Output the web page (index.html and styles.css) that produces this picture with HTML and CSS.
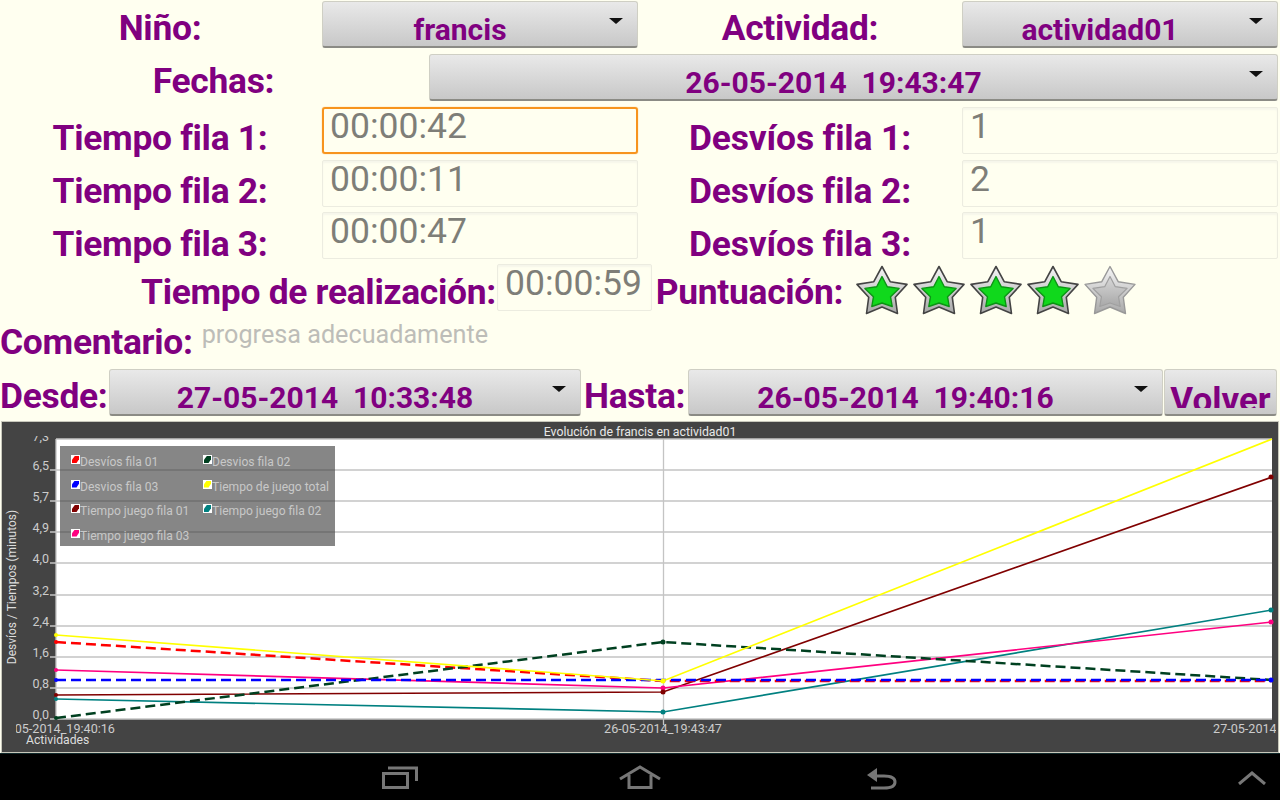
FILE: index.html
```html
<!DOCTYPE html>
<html lang="es">
<head>
    <meta charset="UTF-8">
    <title>Evolución</title>
    <link rel="stylesheet" href="styles.css">
</head>
<body>
    <section class="datos">
        <div class="etiqueta izq">Niño:</div>
        <div class="spinner"><span class="valor">francis</span><i class="flecha"></i></div>
        <div class="etiqueta">Actividad:</div>
        <div class="spinner"><span class="valor">actividad01</span><i class="flecha"></i></div>

        <div class="etiqueta izq fechas">Fechas:</div>
        <div class="spinner ancho"><span class="valor">26-05-2014  19:43:47</span><i class="flecha"></i></div>

        <div class="etiqueta izq baja">Tiempo fila 1:</div>
        <div class="campo foco">00:00:42</div>
        <div class="etiqueta baja desvio">Desvíos fila 1:</div>
        <div class="campo">1</div>

        <div class="etiqueta izq baja">Tiempo fila 2:</div>
        <div class="campo">00:00:11</div>
        <div class="etiqueta baja desvio">Desvíos fila 2:</div>
        <div class="campo">2</div>

        <div class="etiqueta izq baja ultima">Tiempo fila 3:</div>
        <div class="campo">00:00:47</div>
        <div class="etiqueta baja ultima desvio">Desvíos fila 3:</div>
        <div class="campo">1</div>
    </section>

    <section class="puntos">
        <div class="etiqueta realizacion">Tiempo de realización:</div>
        <div class="campo corto">00:00:59</div>
        <div class="etiqueta puntuacion">Puntuación:</div>
        <div class="estrellas">
            <svg class="estrella" viewBox="0 0 52 52"><use href="#star-on"/></svg>
            <svg class="estrella" viewBox="0 0 52 52"><use href="#star-on"/></svg>
            <svg class="estrella" viewBox="0 0 52 52"><use href="#star-on"/></svg>
            <svg class="estrella" viewBox="0 0 52 52"><use href="#star-on"/></svg>
            <svg class="estrella" viewBox="0 0 52 52"><use href="#star-off"/></svg>
        </div>
    </section>

    <section class="comentario">
        <div class="etiqueta">Comentario:</div>
        <div class="nota">progresa adecuadamente</div>
    </section>

    <section class="rango">
        <div class="etiqueta desde">Desde:</div>
        <div class="spinner s-desde"><span class="valor">27-05-2014  10:33:48</span><i class="flecha"></i></div>
        <div class="etiqueta hasta">Hasta:</div>
        <div class="spinner s-hasta"><span class="valor">26-05-2014  19:40:16</span><i class="flecha"></i></div>
        <div class="volver"><span>Volver</span></div>
    </section>

    <section class="grafica">
        <svg class="lienzo" viewBox="2 422 1276 330">
            <defs>
                <clipPath id="zona-y"><rect x="0" y="436" width="56" height="300"/></clipPath>
                <clipPath id="zona-x"><rect x="16" y="720" width="1260" height="20"/></clipPath>
            </defs>
            <text class="titulo" x="640" y="436">Evolución de francis en actividad01</text>
            <rect x="56" y="439" width="1216" height="280" fill="#fff"/>
            <path class="rejilla" d="M56 439H1272M50 470H1272M50 501H1272M50 532H1272M50 563H1272M50 595H1272M50 626H1272M50 657H1272M50 688H1272M50 719H1272M56 719V439M663.5 439V725"/>
            <g class="eje" clip-path="url(#zona-y)">
                <text x="49" y="441">7,3</text>
                <text x="49" y="470">6,5</text>
                <text x="49" y="501">5,7</text>
                <text x="49" y="532">4,9</text>
                <text x="49" y="563">4,0</text>
                <text x="49" y="595">3,2</text>
                <text x="49" y="626">2,4</text>
                <text x="49" y="657">1,6</text>
                <text x="49" y="688">0,8</text>
                <text x="49" y="719">0,0</text>
            </g>
            <text class="eje-y" transform="translate(16 587) rotate(-90)">Desvíos / Tiempos (minutos)</text>
            <g class="eje-x" clip-path="url(#zona-x)">
                <text x="56" y="733">26-05-2014_19:40:16</text>
                <text x="663" y="733">26-05-2014_19:43:47</text>
                <text x="1272" y="733">27-05-2014_10:33:48</text>
            </g>
            <text class="actividades" x="26" y="744">Actividades</text>

            <polyline class="serie" stroke="#800000" points="56,695 663,692 1272,477"/>
            <polyline class="serie" stroke="#008080" points="56,699 663,712 1272,610"/>
            <polyline class="serie" stroke="#ff0080" points="56,670 663,688 1272,622"/>
            <polyline class="serie rayas" stroke="#ff0000" points="56,642 663,681 1272,681"/>
            <polyline class="serie rayas" stroke="#004020" points="56,718 663,642 1272,680"/>
            <polyline class="serie rayas" stroke="#0000ff" points="56,680 1272,680"/>
            <polyline class="serie" stroke="#ffff00" points="56,635 663,681 1272,439"/>

            <g fill="#004020"><circle cx="56" cy="718" r="2"/><circle cx="663" cy="642" r="2.5"/></g>
            <g fill="#ff0000"><circle cx="56" cy="642" r="2"/></g>
            <g fill="#ff0080"><circle cx="56" cy="670" r="2"/><circle cx="663" cy="688" r="2.5"/><circle cx="1271" cy="622" r="2.5"/></g>
            <g fill="#0000ff"><circle cx="56" cy="680" r="2"/><circle cx="1271" cy="680" r="2.5"/></g>
            <g fill="#800000"><circle cx="56" cy="695" r="2"/><circle cx="663" cy="692" r="2.5"/><circle cx="1271" cy="477" r="2.5"/></g>
            <g fill="#008080"><circle cx="56" cy="699" r="2"/><circle cx="663" cy="712" r="2.5"/><circle cx="1271" cy="610" r="2.5"/></g>
            <g fill="#ffff00"><circle cx="56" cy="635" r="2"/><circle cx="663" cy="681" r="2.5"/></g>
        </svg>
        <div class="leyenda">
            <div class="item"><i class="marca c1"></i>Desvíos fila 01</div>
            <div class="item"><i class="marca c2"></i>Desvios fila 02</div>
            <div class="item"><i class="marca c3"></i>Desvios fila 03</div>
            <div class="item"><i class="marca c4"></i>Tiempo de juego total</div>
            <div class="item"><i class="marca c5"></i>Tiempo juego fila 01</div>
            <div class="item"><i class="marca c6"></i>Tiempo juego fila 02</div>
            <div class="item"><i class="marca c7"></i>Tiempo juego fila 03</div>
        </div>
    </section>

    <nav class="barra">
        <svg class="ico recientes" width="36" height="24" viewBox="0 0 36 24">
            <path d="M1.5 8.5H25.5V22.5H1.5Z M6 3H34.5V16"/>
        </svg>
        <svg class="ico casa" width="42" height="24" viewBox="0 0 42 24">
            <path d="M1 14L21 2L41 14 M10 10V22.5H32V10"/>
        </svg>
        <svg class="ico atras" width="32" height="24" viewBox="0 0 32 24">
            <path d="M8 9H18C24 9 29 10 29 15C29 20 24 21 18 21H5"/>
            <path class="relleno" d="M1 8L11 1V15Z"/>
        </svg>
        <svg class="ico subir" width="28" height="14" viewBox="0 0 28 14">
            <path d="M1 13L14 2L27 13"/>
        </svg>
    </nav>

    <svg class="defs" width="0" height="0">
        <defs>
            <linearGradient id="plata" x1="0" y1="0" x2="0" y2="1">
                <stop offset="0" stop-color="#f6f6f6"/>
                <stop offset="1" stop-color="#a8a8a8"/>
            </linearGradient>
            <linearGradient id="gris" x1="0" y1="0" x2="0" y2="1">
                <stop offset="0" stop-color="#d8d8d8"/>
                <stop offset="1" stop-color="#a8a8a8"/>
            </linearGradient>
            <g id="star-on">
                <polygon fill="url(#plata)" stroke="#444" stroke-width="1.6" stroke-linejoin="round" points="26,1.5 34.2,16.7 51,19.4 39.3,32.3 41.5,48.5 26,42 10.5,48.5 12.7,32.3 1,19.4 17.8,16.7"/>
                <polygon fill="#10d81c" stroke="#0b9414" stroke-width="1.4" stroke-linejoin="round" points="26,11.5 31.3,21.7 43.1,23.4 34.56,31.8 36.2,41.5 26,38 15.8,41.5 17.44,31.8 8.9,23.4 20.7,21.7"/>
            </g>
            <g id="star-off">
                <polygon fill="url(#plata)" stroke="#999" stroke-width="1.4" stroke-linejoin="round" points="26,1.5 34.2,16.7 51,19.4 39.3,32.3 41.5,48.5 26,42 10.5,48.5 12.7,32.3 1,19.4 17.8,16.7"/>
                <polygon fill="url(#gris)" stroke="#a0a0a0" stroke-width="1.2" stroke-linejoin="round" points="26,11.5 31.3,21.7 43.1,23.4 34.56,31.8 36.2,41.5 26,38 15.8,41.5 17.44,31.8 8.9,23.4 20.7,21.7"/>
            </g>
        </defs>
    </svg>
</body>
</html>
```

FILE: styles.css
```css
* {
    margin: 0px;
    padding: 0px;
    box-sizing: border-box;
}

body {
    background-color: #fffff0;
    font-family: Roboto, "Liberation Sans", sans-serif;
    width: 1280px;
    height: 800px;
    overflow: hidden;
}

/* textos morados */
.etiqueta {
    color: #800080;
    font-size: 35.4px;
    font-weight: 700;
    line-height: 54px;
    text-align: center;
    white-space: nowrap;
    letter-spacing: -0.3px;
}

.izq {
    padding-right: 2px;
}

.desvio {
    letter-spacing: -0.15px;
}

.baja {
    padding-top: 4px;
}

.ultima {
    padding-top: 5px;
}

/* rejilla de arriba */
.datos {
    display: grid;
    grid-template-columns: 322px 316px 324px 316px;
    grid-template-rows: 53px 53px 53px 52px 52px;
    padding-top: 1px;
}

.fechas {
    grid-column: 1;
    width: 429px;
}

.ancho {
    grid-column: 2 / 5;
    margin-left: 107px;
}

/* spinner de android */
.spinner {
    display: flex;
    align-items: center;
    height: 47px;
    padding-right: 14px;
    background: linear-gradient(#e9e9e9, #c8c8c8);
    border: 1px solid #cfcfc4;
    border-bottom: 2px solid #8b8b85;
    border-radius: 3px;
}

.valor {
    flex: 1;
    color: #800080;
    font-size: 30px;
    font-weight: 700;
    line-height: 47px;
    padding-top: 11px;
    text-align: center;
    white-space: pre;
}

.flecha {
    width: 0;
    height: 0;
    margin: 0 0 6px 12px;
    border-left: 7px solid transparent;
    border-right: 7px solid transparent;
    border-top: 6px solid #111;
}

/* cajas de texto */
.campo {
    height: 47px;
    padding-left: 7px;
    color: #7e7e78;
    font-size: 35.5px;
    line-height: 36px;
    border: 1px solid #ecece0;
    box-shadow: inset 0 2px 2px #f6f6ea;
    border-radius: 2px;
}

.foco {
    border: 2px solid #f7941e;
    padding-left: 6px;
    line-height: 34px;
    border-radius: 3px;
    box-shadow: 0 0 1px #f7941e;
}

.puntos {
    display: flex;
    align-items: flex-start;
    height: 56px;
}

.realizacion {
    margin-left: 141px;
    width: 354px;
    line-height: 56px;
}

.corto {
    width: 155px;
    margin-left: 2px;
    padding-left: 7px;
}

.puntuacion {
    width: 191px;
    margin-left: 2px;
    line-height: 56px;
}

.estrellas {
    display: flex;
    gap: 5px;
    margin-left: 11px;
    margin-top: 1px;
}

.estrella {
    width: 52px;
    height: 52px;
}

.comentario {
    display: flex;
    height: 49px;
}

.comentario .etiqueta {
    line-height: 44px;
}

.nota {
    margin-left: 9px;
    color: #bdbdb8;
    font-size: 25.2px;
    line-height: 30px;
}

.rango {
    display: flex;
    height: 53px;
}

.desde {
    width: 109px;
    text-align: left;
    line-height: 55px;
}

.hasta {
    width: 104px;
    margin-left: 3px;
    text-align: left;
    line-height: 55px;
}

.s-desde {
    width: 472px;
}

.s-hasta {
    width: 475px;
}

.volver {
    width: 113px;
    height: 47px;
    margin-left: 1px;
    text-align: center;
    color: #800080;
    font-size: 35px;
    font-weight: 700;
    background: linear-gradient(#e9e9e9, #c8c8c8);
    border: 1px solid #cfcfc4;
    border-bottom: 2px solid #8b8b85;
    border-radius: 3px;
}

.volver span {
    display: block;
    height: 38px;
    overflow: hidden;
    line-height: 62px;
}

/* grafica */
.grafica {
    position: relative;
    width: 1276px;
    height: 330px;
    margin-left: 2px;
    background-color: #444;
    box-shadow: 0 0 0 1px #c8c8bc;
}

.lienzo {
    display: block;
    width: 1276px;
    height: 330px;
}

.titulo {
    fill: #e8e8e8;
    font-size: 12.3px;
    text-anchor: middle;
}

.rejilla {
    fill: none;
    stroke: #c4c4c4;
    stroke-width: 1.3;
}

.eje text {
    fill: #ccc;
    font-size: 12.5px;
    text-anchor: end;
}

.eje-y {
    fill: #ddd;
    font-size: 12px;
    text-anchor: middle;
}

.eje-x text {
    fill: #ccc;
    font-size: 12.6px;
    text-anchor: middle;
}

.actividades {
    fill: #ddd;
    font-size: 12.2px;
}

.serie {
    fill: none;
    stroke-width: 1.7;
}

.rayas {
    stroke-width: 2.5;
    stroke-dasharray: 10 5;
}

/* leyenda encima de la grafica */
.leyenda {
    position: absolute;
    left: 58px;
    top: 24px;
    width: 275px;
    height: 100px;
    padding: 4px 0 0 11px;
    background-color: rgba(60, 60, 60, 0.62);
    display: grid;
    grid-template-columns: 132px 1fr;
    grid-auto-rows: 24.5px;
    color: #c8c8c8;
    font-size: 12.1px;
    line-height: 24.5px;
}

.item {
    white-space: nowrap;
}

.marca {
    display: inline-block;
    width: 9px;
    height: 9px;
    vertical-align: 2px;
    border: 1px solid #fff;
    background: #fff;
}

.marca::after {
    content: '';
    display: block;
    height: 100%;
    background: currentColor;
    clip-path: polygon(40% 0, 100% 0, 100% 45%, 65% 100%, 0 100%, 0 55%);
}

.c1 { color: #ff0000; }
.c2 { color: #004020; }
.c3 { color: #0000ff; }
.c4 { color: #ffff00; }
.c5 { color: #800000; }
.c6 { color: #008080; }
.c7 { color: #ff0080; }

/* barra de android */
.barra {
    display: flex;
    align-items: flex-start;
    height: 48px;
    margin-top: 1px;
    background-color: #000;
    border-top: 1px solid #10282a;
}

.ico path {
    fill: none;
    stroke: #777;
    stroke-width: 3;
}

.ico .relleno {
    fill: #777;
    stroke: none;
}

.recientes {
    margin: 11px 0 0 382px;
}

.casa {
    margin: 11px 0 0 201px;
}

.atras {
    margin: 13px 0 0 205px;
}

.subir {
    margin: 17px 0 0 340px;
}

.defs {
    position: absolute;
}
```
